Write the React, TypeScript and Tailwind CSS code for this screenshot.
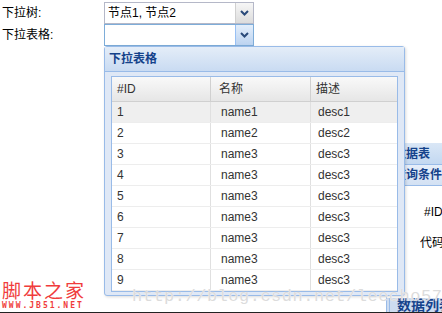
import React from "react";

const rows = [
  ["1", "name1", "desc1"],
  ["2", "name2", "desc2"],
  ["3", "name3", "desc3"],
  ["4", "name3", "desc3"],
  ["5", "name3", "desc3"],
  ["6", "name3", "desc3"],
  ["7", "name3", "desc3"],
  ["8", "name3", "desc3"],
  ["9", "name3", "desc3"],
];

const font = "font-['Tahoma','Liberation_Sans','Noto_Sans_CJK_SC',sans-serif]";

function Arrow({ active }: { active?: boolean }) {
  return (
    <div
      className={
        "flex h-full w-[18px] items-center justify-center border-l " +
        (active
          ? "border-[#98c0f4] bg-gradient-to-b from-[#e3eefb] to-[#bcd3f0]"
          : "border-[#d0d0d0] bg-gradient-to-b from-[#f6f6f6] to-[#dcdcdc]")
      }
    >
      <svg width="9" height="6" viewBox="0 0 9 6">
        <path d="M1 1 L4.5 4.5 L8 1" stroke="#2a4a7a" strokeWidth="2" fill="none" />
      </svg>
    </div>
  );
}

function Combo({ value, active }: { value?: string; active?: boolean }) {
  return (
    <div
      className={
        "flex h-[22px] w-[150px] items-stretch border bg-white " +
        (active ? "border-[#7eadd9]" : "border-[#b5b8c8]")
      }
    >
      <div className="flex flex-1 items-center pl-[3px] text-[12px] text-black">{value}</div>
      <Arrow active={active} />
    </div>
  );
}

export default function App() {
  return (
    <div className={"relative h-[313px] w-[442px] overflow-hidden bg-white " + font}>
      {/* form */}
      <div className="flex flex-col pt-[1px]">
        <div className="flex h-[23px] items-center">
          <span className="w-[104px] pl-[2px] text-[12px] text-black">下拉树:</span>
          <Combo value="节点1, 节点2" />
        </div>
        <div className="flex h-[22px] items-center">
          <span className="w-[104px] pl-[2px] text-[12px] text-black">下拉表格:</span>
          <Combo active />
        </div>
      </div>

      {/* page content behind */}
      <div className="flex justify-end pt-[97px]">
        <div className="flex w-[56px] flex-col border-l border-[#99bbe8]">
          <div className="flex h-[22px] items-center whitespace-nowrap border-b border-[#99bbe8] bg-gradient-to-b from-[#dae7f6] to-[#c3d8f1] pl-[7px] text-[12px] font-bold text-[#15428b]">
            数据表
          </div>
          <div className="flex h-[21px] items-center whitespace-nowrap border-b border-[#99bbe8] bg-gradient-to-b from-[#e6eefa] to-[#d3e1f3] pl-[7px] text-[12px] font-bold text-[#15428b]">
            查询条件
          </div>
          <div className="flex h-[112px] flex-col gap-[13px] whitespace-nowrap pl-[37px] pt-[17px] text-[12px] text-black">
            <span>#ID</span>
            <span className="-ml-[4px]">代码</span>
          </div>
        </div>
      </div>
      <div className="flex justify-end">
        <div className="flex h-[14px] w-[56px] items-end whitespace-nowrap border-l-[4px] border-double border-[#99bbe8] bg-[#cddcf0] pl-[7px] text-[14px] font-bold leading-[14px] text-[#15428b]">
          数据列表
        </div>
      </div>
      <div className="h-[2px] w-full bg-[#222]" />

      {/* dropdown overlay */}
      <div className="absolute left-[104px] top-[46px] flex w-[301px] flex-col rounded-[3px] border border-[#99bbe8] bg-[#dfe8f6] shadow-[1px_1px_3px_rgba(0,0,0,0.15)]">
        <div className="flex h-[25px] shrink-0 items-center border-b border-[#99bbe8] bg-gradient-to-b from-[#e4edf8] to-[#c9dbf2] pl-[4px] text-[12px] font-bold text-[#15428b]">
          下拉表格
        </div>
        <div className="flex px-[6px] pb-[3px] pt-[4px]">
          <div className="flex flex-1 flex-col border border-[#99bbe8] bg-white">
            <div className="grid h-[25px] shrink-0 grid-cols-[99px_100px_1fr] border-b border-[#d0d0d0] bg-gradient-to-b from-[#f9f9f9] to-[#e6e6e6] text-[12px] text-[#333]">
              <div className="flex items-center border-r border-[#d0d0d0] pl-[5px]">#ID</div>
              <div className="flex items-center border-r border-[#d0d0d0] pl-[8px]">名称</div>
              <div className="flex items-center pl-[5px]">描述</div>
            </div>
            {rows.map((r, i) => (
              <div
                key={i}
                className={
                  "grid h-[21px] shrink-0 grid-cols-[99px_100px_1fr] border-b border-[#ededed] text-[12px] text-[#333] " +
                  (i === 0 ? "bg-[#efefef]" : "bg-white")
                }
              >
                <div className="flex items-center border-r border-[#e0e0e0] pl-[5px]">{r[0]}</div>
                <div className="flex items-center border-r border-[#e0e0e0] pl-[10px]">{r[1]}</div>
                <div className="flex items-center pl-[7px]">{r[2]}</div>
              </div>
            ))}
          </div>
        </div>
      </div>

      {/* watermarks */}
      <div className="absolute left-[132px] top-[284px] whitespace-nowrap font-['Liberation_Mono',monospace] text-[17px] tracking-[0.5px] text-[#dcdcdc] [text-shadow:0_0_1px_#fff]">
        http://blog.csdn.net/leecho571
      </div>
      <div className="absolute left-[2px] top-[280px] flex flex-col leading-none text-[#f03c3c]">
        <span className="font-['Noto_Sans_CJK_SC',sans-serif] text-[19px] tracking-[2px]">脚本之家</span>
        <span className="mt-[3px] font-['DejaVu_Sans_Mono',monospace] text-[8px] font-bold tracking-[2px]">WWW.JB51.NET</span>
      </div>
    </div>
  );
}
